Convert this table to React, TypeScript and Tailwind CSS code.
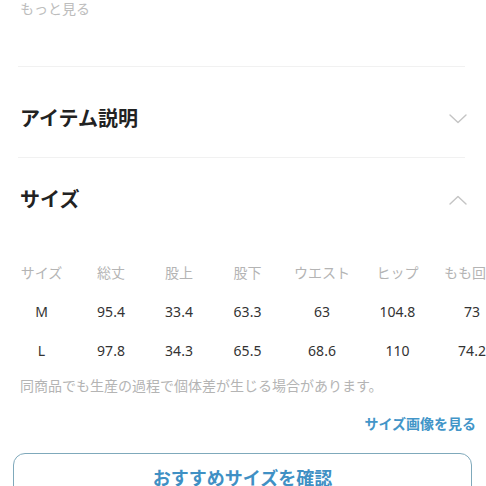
import { ReactNode } from "react";

const FONT = { fontFamily: '"Noto Sans", "Noto Sans CJK JP", sans-serif' };

const HEAD = ["サイズ", "総丈", "股上", "股下", "ウエスト", "ヒップ", "もも回り"];
const ROWS = [
  ["M", "95.4", "33.4", "63.3", "63", "104.8", "73"],
  ["L", "97.8", "34.3", "65.5", "68.6", "110", "74.2"],
];

function Chevron({ up }: { up?: boolean }) {
  return (
    <svg width="18" height="10" viewBox="0 0 18 10" fill="none" className="shrink-0">
      <polyline
        points={up ? "1,9 9,1.5 17,9" : "1,1 9,8.5 17,1"}
        stroke="#c4c4c4"
        strokeWidth="1.4"
        strokeLinecap="round"
        strokeLinejoin="round"
      />
    </svg>
  );
}

function Row({ cells, head }: { cells: string[]; head?: boolean }): ReactNode {
  return (
    <div className="grid h-[39px] grid-cols-[83px_56px_80px_57px_92px_59px_90px] items-center">
      {cells.map((c, i) => (
        <div
          key={i}
          className={head ? "text-center text-[14px] whitespace-nowrap text-[#b4b4b4]" : "text-center text-[14px] whitespace-nowrap text-[#333]"}
        >
          {c}
        </div>
      ))}
    </div>
  );
}

export default function App() {
  return (
    <div style={FONT} className="h-[486px] w-[486px] overflow-hidden bg-white">
      <div className="pl-5 text-[14px] leading-[18px] text-[#bdbdbd]">もっと見る</div>
      <div className="mt-[48px] ml-[18px] h-px w-[447px] bg-[#f1f1f1]" />

      {/* アイテム説明 */}
      <div className="flex items-center justify-between pt-[39px] pr-[19px] pb-[25px] pl-5">
        <span className="text-[20px] leading-[26px] font-bold text-[#222]">アイテム説明</span>
        <Chevron />
      </div>
      <div className="ml-[18px] h-px w-[447px] bg-[#f1f1f1]" />

      {/* サイズ */}
      <div className="flex items-center justify-between pt-[29px] pr-[19px] pl-5">
        <span className="text-[20px] leading-[26px] font-bold text-[#222]">サイズ</span>
        <Chevron up />
      </div>

      <div className="mt-[40px]">
        <Row cells={HEAD} head />
        {ROWS.map((r) => (
          <Row key={r[0]} cells={r} />
        ))}
      </div>

      <p className="mt-[6px] pl-5 text-[14px] leading-[20px] whitespace-nowrap text-[#b4b4b4]">
        同商品でも生産の過程で個体差が生じる場合があります。
      </p>

      <div className="mt-[18px] pr-[10px] text-right text-[14px] leading-[20px] font-bold text-[#4295c8]">
        サイズ画像を見る
      </div>

      <button
        type="button"
        className="mt-[19px] ml-[13px] flex h-[50px] w-[459px] items-center justify-center rounded-[12px] border border-[#7fa9bb] text-[18px] font-bold text-[#3f90c4]"
      >
        おすすめサイズを確認
      </button>
    </div>
  );
}
